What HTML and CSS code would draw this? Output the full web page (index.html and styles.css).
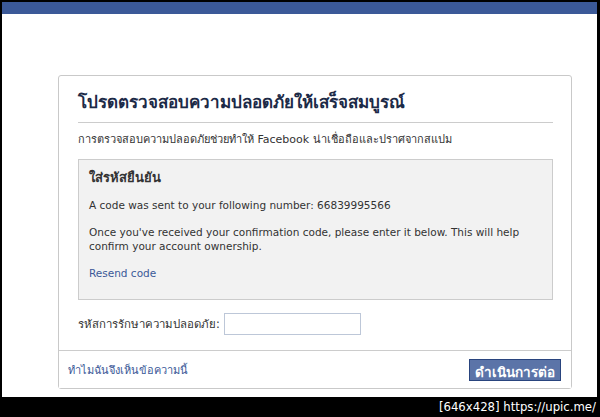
FILE: index.html
```html
<!DOCTYPE html>
<html>
<head>
<meta charset="utf-8">
<link rel="stylesheet" href="styles.css">
</head>
<body>
<div class="screen">
  <div class="topbar"></div>
  <div class="card">
    <div class="card-body">
      <h1 class="title">โปรดตรวจสอบความปลอดภัยให้เสร็จสมบูรณ์</h1>
      <p class="subtitle">การตรวจสอบความปลอดภัยช่วยทำให้ Facebook น่าเชื่อถือและปราศจากสแปม</p>
      <div class="panel">
        <h2 class="panel-title">ใส่รหัสยืนยัน</h2>
        <p class="en">A code was sent to your following number: 66839995566</p>
        <p class="en">Once you've received your confirmation code, please enter it below. This will help confirm your account ownership.</p>
        <a class="link en" href="#">Resend code</a>
      </div>
      <div class="field">
        <label class="field-label">รหัสการรักษาความปลอดภัย:</label>
        <input class="field-input" type="text">
      </div>
    </div>
    <div class="card-foot">
      <a class="link foot-link" href="#">ทำไมฉันจึงเห็นข้อความนี้</a>
      <button class="btn">ดำเนินการต่อ</button>
    </div>
  </div>
</div>
<div class="watermark">[646x428] https://upic.me/</div>
</body>
</html>
```
FILE: styles.css
```css
html, body {
  margin: 0;
  padding: 0;
}
body {
  background: #000;
  width: 600px;
  height: 417px;
  overflow: hidden;
  font-family: Tahoma, "DejaVu Sans", "Noto Sans", sans-serif;
  color: #333;
}
.screen {
  margin: 2px 3px 0 2px;
  background: #fff;
  height: 395px;
  overflow: hidden;
}
.topbar {
  height: 12px;
  background: #3b5998;
}
.card {
  margin: 61px 0 0 56px;
  width: 512px;
  border: 1px solid #c9c9c9;
  border-radius: 3px;
  background: #fff;
}
.card-body {
  padding: 0 18px 15px 19px;
}
.title {
  margin: 0;
  padding: 16px 0 9px;
  font-size: 17px;
  font-weight: bold;
  color: #1c2a47;
  border-bottom: 1px solid #ccc;
  line-height: 21px;
}
.subtitle {
  margin: 10px 0 12px;
  font-size: 11px;
  line-height: 14px;
  color: #333;
}
.panel {
  background: #f2f2f2;
  border: 1px solid #ccc;
  padding: 9px 10px 19px 10px;
}
.panel-title {
  margin: 0 0 11px;
  font-size: 13px;
  font-weight: bold;
  color: #333;
  line-height: 18px;
}
.en {
  font-family: Tahoma, "DejaVu Sans", sans-serif;
  font-size: 10.5px;
  line-height: 14px;
  margin: 0 0 13px;
  color: #333;
}
.link {
  color: #3b5998;
  text-decoration: none;
}
.panel .link {
  display: block;
  margin: 0;
}
.field {
  display: flex;
  align-items: center;
  gap: 4px;
  margin-top: 13px;
}
.field-label {
  font-size: 11.4px;
  color: #333;
}
.field-input {
  width: 131px;
  height: 18px;
  border: 1px solid #bdc7d8;
  padding: 1px 2px;
  margin: 0;
}
.card-foot {
  border-top: 1px solid #ccc;
  display: flex;
  align-items: center;
  justify-content: space-between;
  padding: 8px 10px 7px 9px;
  background: #fff;
}
.foot-link {
  font-size: 11px;
}
.btn {
  font-family: Tahoma, "DejaVu Sans", sans-serif;
  font-size: 13.5px;
  font-weight: bold;
  color: #fff;
  background: #5b74a8;
  border: 1px solid #29447e;
  padding: 1px 5px;
  height: 22px;
  margin: 0;
}
.watermark {
  height: 20px;
  text-align: right;
  padding-right: 4px;
  color: #fff;
  font-family: "DejaVu Sans Condensed", "DejaVu Sans", sans-serif;
  font-size: 13px;
  line-height: 20px;
}
```
